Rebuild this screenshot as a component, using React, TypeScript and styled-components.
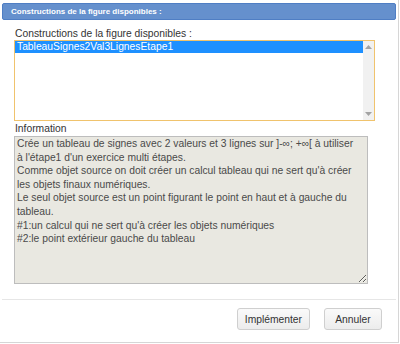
import React from 'react';
import styled, { createGlobalStyle } from 'styled-components';

const GlobalStyle = createGlobalStyle`
  html, body {
    margin: 0;
    padding: 0;
    background: #ffffff;
    font-family: "Liberation Sans", Arial, sans-serif;
  }
`;

const infoText = `Crée un tableau de signes avec 2 valeurs et 3 lignes sur ]-∞; +∞[ à utiliser à l'étape1 d'un exercice multi étapes.
Comme objet source on doit créer un calcul tableau qui ne sert qu'à créer les objets finaux numériques.
Le seul objet source est un point figurant le point en haut et à gauche du tableau.
#1:un calcul qui ne sert qu'à créer les objets numériques
#2:le point extérieur gauche du tableau`;

export default function App() {
  return (
    <>
      <GlobalStyle />
      <Dialog>
        <TitleBar>Constructions de la figure disponibles :</TitleBar>
        <Content>
          <FieldLabel>Constructions de la figure disponibles :</FieldLabel>
          <ListBox>
            <Items>
              <Item selected>TableauSignes2Val3LignesEtape1</Item>
            </Items>
            <ScrollTrack>
              <Arrow>
                <svg width="7" height="4" viewBox="0 0 7 4">
                  <path d="M0 4 L3.5 0 L7 4 Z" fill="#a3a3a3" />
                </svg>
              </Arrow>
              <Arrow>
                <svg width="7" height="4" viewBox="0 0 7 4">
                  <path d="M0 0 L3.5 4 L7 0 Z" fill="#a3a3a3" />
                </svg>
              </Arrow>
            </ScrollTrack>
          </ListBox>
          <FieldLabel tall>Information</FieldLabel>
          <InfoArea readOnly value={infoText} />
        </Content>
        <Separator />
        <ButtonRow>
          <Button>Implémenter</Button>
          <Button>Annuler</Button>
        </ButtonRow>
      </Dialog>
    </>
  );
}

const Dialog = styled.div`
  box-sizing: border-box;
  width: 399px;
  height: 343px;
  padding: 3px 2px 0 2px;
  border-right: 1px solid #d6d6d6;
  border-bottom: 1px solid #d6d6d6;
  display: flex;
  flex-direction: column;
`;

const TitleBar = styled.div`
  box-sizing: border-box;
  height: 17px;
  background: #6590cd;
  border: 1px solid #4f7ec4;
  border-radius: 2px;
  color: #ffffff;
  font-size: 8px;
  font-weight: bold;
  line-height: 15px;
  padding-left: 8px;
`;

const Content = styled.div`
  display: flex;
  flex-direction: column;
  align-items: flex-start;
  padding-left: 12px;
  margin-top: 7px;
`;

const FieldLabel = styled.div<{ tall?: boolean }>`
  font-size: 10.3px;
  color: #333333;
  height: ${(p) => (p.tall ? '15px' : '13px')};
  line-height: ${(p) => (p.tall ? '15px' : '13px')};
  padding-left: 1px;
`;

const ListBox = styled.div`
  box-sizing: border-box;
  width: 361px;
  height: 81px;
  border: 1px solid #f0c36d;
  display: flex;
  background: #ffffff;
`;

const Items = styled.div`
  flex: 1;
  display: flex;
  flex-direction: column;
`;

const Item = styled.div<{ selected?: boolean }>`
  height: 12px;
  line-height: 12px;
  font-size: 10.3px;
  padding-left: 2px;
  color: ${(p) => (p.selected ? '#ffffff' : '#333333')};
  background: ${(p) => (p.selected ? '#1e90ff' : 'transparent')};
`;

const ScrollTrack = styled.div`
  width: 11px;
  background: #f1f1f1;
  display: flex;
  flex-direction: column;
  justify-content: space-between;
  align-items: center;
  padding: 4px 0;
`;

const Arrow = styled.div`
  display: flex;
  line-height: 0;
`;

const InfoArea = styled.textarea`
  box-sizing: border-box;
  width: 354px;
  height: 148px;
  margin: 0;
  padding: 0 6px 0 2px;
  background: #e9e8e1;
  border: 1px solid #bdbdbd;
  border-radius: 0;
  color: #4a4a4a;
  font-family: "Liberation Sans", Arial, sans-serif;
  font-size: 10.3px;
  line-height: 13.6px;
  resize: both;
  outline: none;
  overflow: hidden;
`;

const Separator = styled.div`
  height: 1px;
  background: #e6e6e6;
  margin-top: 15px;
`;

const ButtonRow = styled.div`
  display: flex;
  justify-content: flex-end;
  gap: 14px;
  margin-top: 8px;
  padding-right: 14px;
`;

const Button = styled.button`
  box-sizing: border-box;
  height: 22px;
  min-width: 58px;
  padding: 0 7px;
  background: linear-gradient(#fafafa, #ececec);
  border: 1px solid #cfcfcf;
  border-radius: 3px;
  color: #333333;
  font-family: "Liberation Sans", Arial, sans-serif;
  font-size: 10.3px;
`;
